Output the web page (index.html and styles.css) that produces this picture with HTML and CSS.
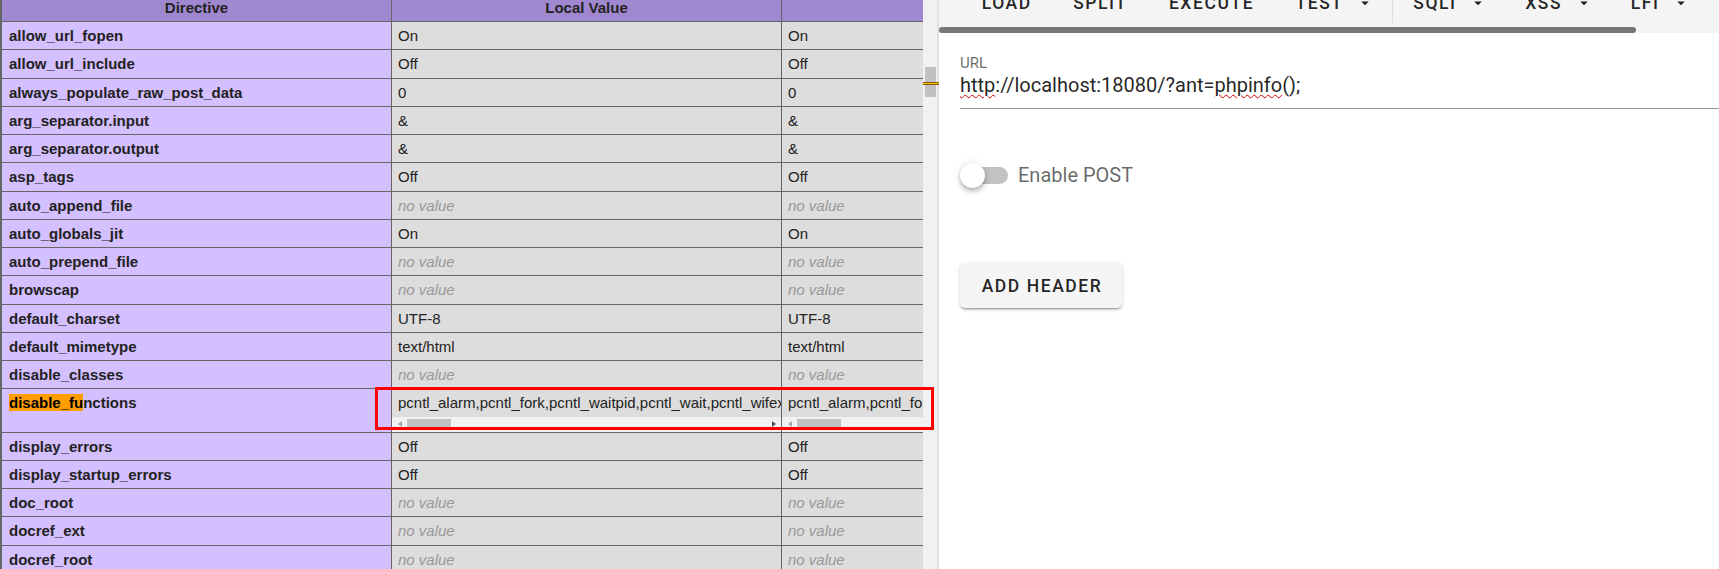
FILE: index.html
```html
<!DOCTYPE html>
<html lang="en">
<head>
<meta charset="utf-8">
<title>phpinfo - HackBar</title>
<link rel="stylesheet" href="styles.css">
</head>
<body>
<div class="app">
  <div class="page">
    <div class="page-content">
      <table class="info">
        <tr class="h">
          <th class="c1">Directive</th>
          <th class="c2">Local Value</th>
          <th class="c3">Master Value</th>
        </tr>
        <tr><td class="e">allow_url_fopen</td><td class="v">On</td><td class="v">On</td></tr>
        <tr><td class="e">allow_url_include</td><td class="v">Off</td><td class="v">Off</td></tr>
        <tr><td class="e">always_populate_raw_post_data</td><td class="v">0</td><td class="v">0</td></tr>
        <tr><td class="e">arg_separator.input</td><td class="v">&amp;</td><td class="v">&amp;</td></tr>
        <tr><td class="e">arg_separator.output</td><td class="v">&amp;</td><td class="v">&amp;</td></tr>
        <tr><td class="e">asp_tags</td><td class="v">Off</td><td class="v">Off</td></tr>
        <tr><td class="e">auto_append_file</td><td class="v"><i>no value</i></td><td class="v"><i>no value</i></td></tr>
        <tr><td class="e">auto_globals_jit</td><td class="v">On</td><td class="v">On</td></tr>
        <tr><td class="e">auto_prepend_file</td><td class="v"><i>no value</i></td><td class="v"><i>no value</i></td></tr>
        <tr><td class="e">browscap</td><td class="v"><i>no value</i></td><td class="v"><i>no value</i></td></tr>
        <tr><td class="e">default_charset</td><td class="v">UTF-8</td><td class="v">UTF-8</td></tr>
        <tr><td class="e">default_mimetype</td><td class="v">text/html</td><td class="v">text/html</td></tr>
        <tr><td class="e">disable_classes</td><td class="v"><i>no value</i></td><td class="v"><i>no value</i></td></tr>
        <tr>
          <td class="e"><span class="hl">disable_fu</span>nctions</td>
          <td class="v scrollcell">
            <div class="clip">pcntl_alarm,pcntl_fork,pcntl_waitpid,pcntl_wait,pcntl_wifexited,pcntl_wifstopped,pcntl_wifsignaled,pcntl_wifcontinued,pcntl_wexitstatus</div>
            <div class="hbar"><span class="arr arr-l"></span><span class="hthumb"></span><span class="hbar-fill"></span><span class="arr arr-r"></span></div>
          </td>
          <td class="v scrollcell">
            <div class="clip">pcntl_alarm,pcntl_fork,pcntl_waitpid,pcntl_wait,pcntl_wifexited,pcntl_wifstopped,pcntl_wifsignaled,pcntl_wifcontinued,pcntl_wexitstatus</div>
            <div class="hbar"><span class="arr arr-l"></span><span class="hthumb"></span><span class="hbar-fill"></span><span class="arr arr-r"></span></div>
          </td>
        </tr>
        <tr><td class="e">display_errors</td><td class="v">Off</td><td class="v">Off</td></tr>
        <tr><td class="e">display_startup_errors</td><td class="v">Off</td><td class="v">Off</td></tr>
        <tr><td class="e">doc_root</td><td class="v"><i>no value</i></td><td class="v"><i>no value</i></td></tr>
        <tr><td class="e">docref_ext</td><td class="v"><i>no value</i></td><td class="v"><i>no value</i></td></tr>
        <tr><td class="e">docref_root</td><td class="v"><i>no value</i></td><td class="v"><i>no value</i></td></tr>
      </table>
    </div>
    <div class="vscroll"><div class="vthumb"></div></div>
    <div class="find-mark"></div>
    <div class="annot"></div>
  </div>

  <div class="hackbar">
    <div class="toolbar">
      <div class="tb-clip">
        <div class="tb-row">
          <span class="btn">Load</span>
          <span class="btn">Split</span>
          <span class="btn">Execute</span>
          <span class="btn menu">Test<svg class="caret" viewBox="0 0 24 24"><path d="M7 10l5 5 5-5z"/></svg></span>
          <span class="divider"></span>
          <span class="btn menu">SQLI<svg class="caret" viewBox="0 0 24 24"><path d="M7 10l5 5 5-5z"/></svg></span>
          <span class="btn menu">XSS<svg class="caret" viewBox="0 0 24 24"><path d="M7 10l5 5 5-5z"/></svg></span>
          <span class="btn menu">LFI<svg class="caret" viewBox="0 0 24 24"><path d="M7 10l5 5 5-5z"/></svg></span>
        </div>
      </div>
      <div class="tb-scroll"><div class="tb-thumb"></div></div>
    </div>

    <div class="hb-body">
      <div class="field">
        <div class="field-label">URL</div>
        <div class="field-input"><span class="sp">http</span>://localhost:18080/?ant=<span class="sp">phpinfo</span>();</div>
      </div>

      <div class="switch-row">
        <span class="switch"><span class="track"></span><span class="knob"></span></span>
        <span class="switch-label">Enable POST</span>
      </div>

      <div class="btn-row">
        <span class="raised">Add Header</span>
      </div>
    </div>
  </div>
</div>
</body>
</html>
```

FILE: styles.css
```css
html, body {
  margin: 0;
  padding: 0;
  background: #fff;
}

.app {
  display: flex;
  width: 1719px;
  height: 569px;
  overflow: hidden;
  position: relative;
}

/* ---------- left: phpinfo page ---------- */
.page {
  display: flex;
  width: 937px;
  height: 569px;
  flex: none;
  position: relative;
}

.page-content {
  width: 923px;
  height: 569px;
  overflow: hidden;
  flex: none;
}

.info {
  table-layout: fixed;
  border-collapse: separate;
  border-spacing: 0;
  width: 1182px;
  margin-top: -6.25px;
  font-family: "Liberation Sans", Arial, sans-serif;
  font-size: 15px;
  line-height: 17.25px;
  color: #222;
}

.info th,
.info td {
  box-sizing: border-box;
  padding: 5px 6px;
  border-right: 1px solid #666;
  border-bottom: 1px solid #666;
  vertical-align: baseline;
  text-align: left;
  white-space: nowrap;
  overflow: hidden;
}

.info tr.h th {
  background: #a088d0;
  font-weight: bold;
  text-align: center;
}

.c1 { width: 392px; border-left: 2px solid #666; }
.c2 { width: 390px; }
.c3 { width: 400px; }

.info td.e {
  background: #d4bfff;
  font-weight: bold;
  border-left: 2px solid #666;
  padding-left: 7px;
}

.info td.v {
  background: #dddddd;
}

.info td.v i {
  color: #999;
}

.hl {
  background: #ff9c00;
  color: #000;
}

.info td.scrollcell {
  padding: 0;
  vertical-align: top;
}

.clip {
  padding: 5px 0 5px 6px;
  white-space: nowrap;
  overflow: hidden;
}

.hbar {
  display: flex;
  align-items: center;
  height: 15px;
  background: #f1f1f1;
}

.arr {
  width: 15px;
  height: 15px;
  flex: none;
  display: flex;
  align-items: center;
  justify-content: center;
}

.arr::before {
  content: "";
  width: 0;
  height: 0;
  border-top: 3px solid transparent;
  border-bottom: 3px solid transparent;
}

.arr-l::before {
  border-right: 4px solid #a3a3a3;
}

.arr-r::before {
  border-left: 4px solid #505050;
}

.hthumb {
  width: 44px;
  height: 11px;
  background: #c1c1c1;
  flex: none;
}

.hbar-fill {
  flex: 1;
}

.vscroll {
  width: 14px;
  height: 569px;
  background: #f1f1f1;
  flex: none;
  padding-top: 67px;
  box-sizing: border-box;
}

.vthumb {
  width: 11px;
  height: 30px;
  margin-left: 2px;
  background: #c1c1c1;
}

.find-mark {
  position: absolute;
  left: 923px;
  top: 82px;
  width: 16px;
  height: 1px;
  background: #f2c200;
  border-top: 1px solid #8a5a10;
  border-bottom: 1px solid #8a5a10;
}

.annot {
  position: absolute;
  left: 375px;
  top: 387px;
  width: 559px;
  height: 43px;
  box-sizing: border-box;
  border: 3px solid #ff0000;
}

/* ---------- right: HackBar ---------- */
.hackbar {
  flex: 1;
  border-left: 2px solid #e2e2e2;
  font-family: Roboto, "Noto Sans", sans-serif;
  color: rgba(0, 0, 0, 0.87);
  min-width: 0;
}

.toolbar {
  background: #f4f4f4;
  display: flex;
  flex-direction: column;
}

.tb-clip {
  height: 27px;
  overflow: hidden;
}

.tb-row {
  display: flex;
  align-items: flex-start;
  height: 32px;
  margin-top: -9px;
  padding-left: 22px;
}

.btn {
  display: inline-flex;
  align-items: center;
  height: 24px;
  line-height: 24px;
  padding: 0 20.7px;
  font-size: 17.5px;
  font-weight: 500;
  letter-spacing: 1.5625px;
  text-transform: uppercase;
  white-space: nowrap;
  flex: none;
}

.btn.menu {
  padding-right: 17.5px;
}

.caret {
  width: 18px;
  height: 18px;
  margin-left: 12.5px;
  fill: rgba(0, 0, 0, 0.87);
  flex: none;
}

.divider {
  width: 1px;
  height: 32px;
  background: #dcdcdc;
  flex: none;
}

.tb-scroll {
  height: 6px;
}

.tb-thumb {
  width: 697px;
  height: 6px;
  border-radius: 3px;
  background: #777;
}

.hb-body {
  padding-left: 21px;
}

.field {
  padding-top: 21px;
}

.field-label {
  font-size: 15px;
  line-height: 18px;
  color: rgba(0, 0, 0, 0.6);
}

.field-input {
  margin-top: 1px;
  font-size: 20px;
  line-height: 24px;
  padding-bottom: 11px;
  border-bottom: 1px solid rgba(0, 0, 0, 0.42);
  color: rgba(0, 0, 0, 0.87);
  white-space: nowrap;
}

.sp {
  text-decoration: underline wavy #e00000;
  text-decoration-thickness: 1px;
  text-underline-offset: 2px;
}

.switch-row {
  display: flex;
  align-items: center;
  height: 25px;
  margin-top: 54px;
}

.switch {
  position: relative;
  width: 48px;
  height: 25px;
  flex: none;
}

.track {
  position: absolute;
  left: 3px;
  top: 4px;
  width: 45px;
  height: 17px;
  border-radius: 9px;
  background: #c2c2c2;
}

.knob {
  position: absolute;
  left: 0;
  top: 0;
  width: 25px;
  height: 25px;
  border-radius: 50%;
  background: #fff;
  box-shadow: 0 2px 4px -1px rgba(0, 0, 0, 0.2), 0 4px 5px 0 rgba(0, 0, 0, 0.14), 0 1px 10px 0 rgba(0, 0, 0, 0.12);
}

.switch-label {
  margin-left: 10px;
  font-size: 20px;
  line-height: 25px;
  color: rgba(0, 0, 0, 0.6);
}

.btn-row {
  margin-top: 75px;
  display: flex;
}

.raised {
  display: inline-flex;
  align-items: center;
  justify-content: center;
  box-sizing: border-box;
  width: 162px;
  height: 45px;
  padding-left: 2px;
  border-radius: 5px;
  background: #f5f5f5;
  box-shadow: 0 3px 1px -2px rgba(0, 0, 0, 0.2), 0 2px 2px 0 rgba(0, 0, 0, 0.14), 0 1px 5px 0 rgba(0, 0, 0, 0.12);
  font-size: 17.5px;
  font-weight: 500;
  letter-spacing: 1.5625px;
  text-transform: uppercase;
  color: rgba(0, 0, 0, 0.87);
  white-space: nowrap;
}
```
